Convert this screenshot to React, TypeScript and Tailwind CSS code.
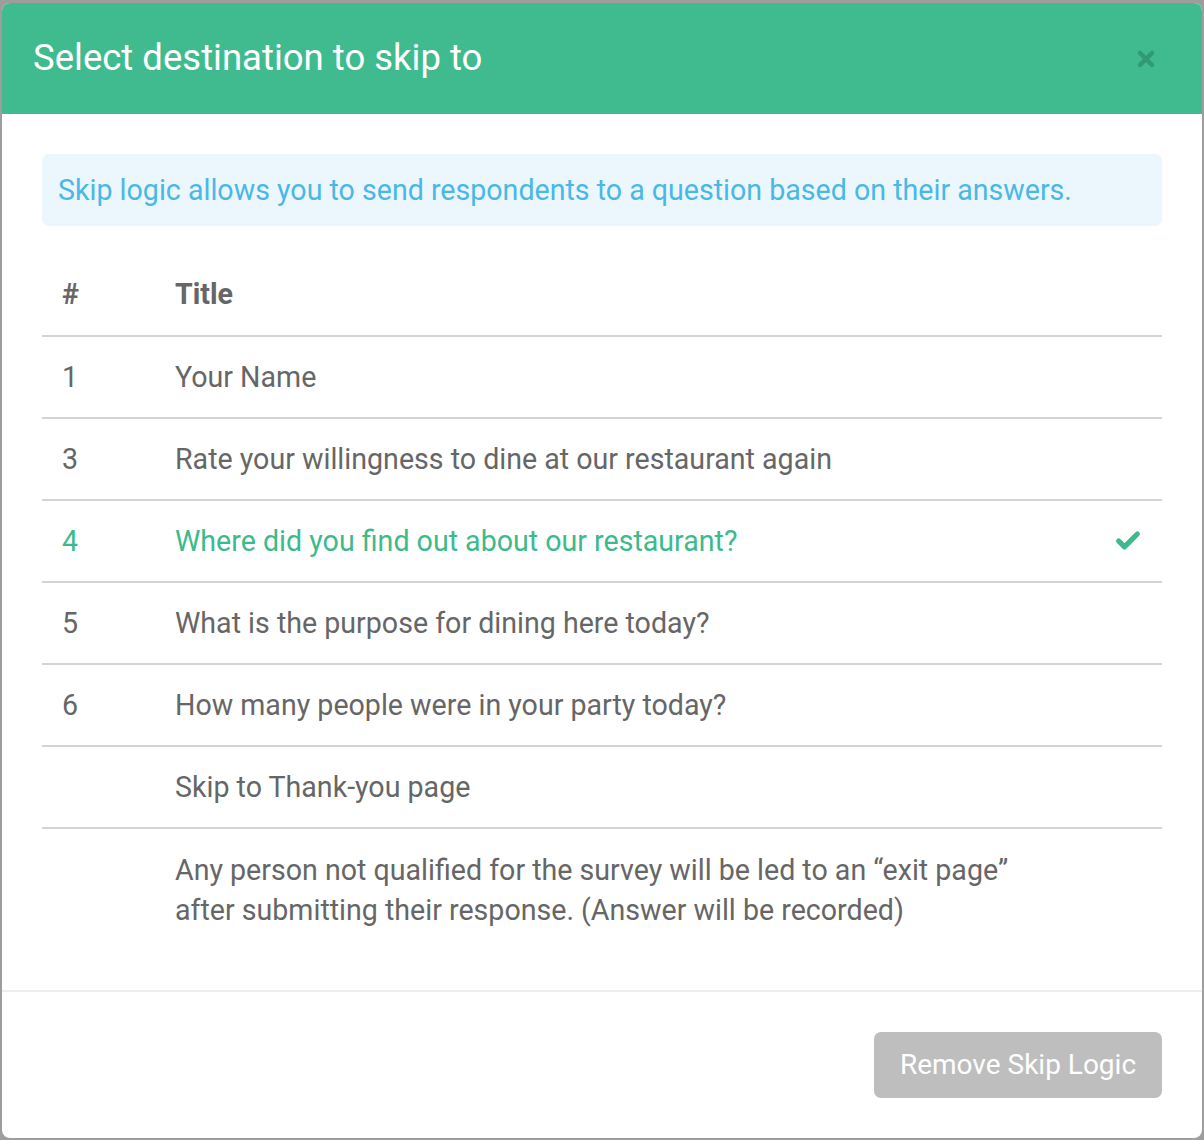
import { Check, X } from 'lucide-react';

const ROWS = [
  { num: '1', title: 'Your Name' },
  { num: '3', title: 'Rate your willingness to dine at our restaurant again' },
  { num: '4', title: 'Where did you find out about our restaurant?', selected: true },
  { num: '5', title: 'What is the purpose for dining here today?' },
  { num: '6', title: 'How many people were in your party today?' },
  { num: '', title: 'Skip to Thank-you page' },
];

const App = () => {
  return (
    <div className="h-[1140px] w-[1204px] bg-[#9d9d9d] pl-[2px] pt-[3px] font-['Roboto',sans-serif]">
      <div className="flex h-[1135px] w-[1200px] flex-col overflow-hidden rounded-[8px] bg-white">
        {/* Header */}
        <div className="flex h-[111px] shrink-0 items-center justify-between bg-[#40bb8f] pl-[31px] pr-[44px]">
          <h2 className="text-[36.5px] font-normal text-white">Select destination to skip to</h2>
          <button className="text-[#2f9a74]">
            <X className="h-[24px] w-[24px]" strokeWidth={4.5} />
          </button>
        </div>

        {/* Body */}
        <div className="flex-1 px-[40px] pt-[40px]">
          <div className="flex h-[72px] items-center rounded-[7px] bg-[#ebf7fc] px-[16px] text-[28.6px] text-[#4ab7e6]">
            Skip logic allows you to send respondents to a question based on their answers.
          </div>

          <table className="mt-[28px] w-full border-collapse text-[28.6px] text-[#666666]">
            <thead>
              <tr className="h-[82px] border-b-2 border-[#d4d4d4]">
                <th className="w-[133px] pl-[20px] text-left font-bold">#</th>
                <th className="text-left font-bold">Title</th>
                <th className="w-[60px]"></th>
              </tr>
            </thead>
            <tbody>
              {ROWS.map((row) => (
                <tr
                  key={row.title}
                  className={`h-[82px] border-b-2 border-[#d4d4d4] ${row.selected ? 'text-[#3dba8c]' : ''}`}
                >
                  <td className="pl-[20px]">{row.num}</td>
                  <td>{row.title}</td>
                  <td className="pr-[20px] text-right">
                    {row.selected && <Check className="ml-auto h-[28px] w-[28px]" strokeWidth={4.5} />}
                  </td>
                </tr>
              ))}
              <tr>
                <td></td>
                <td className="py-[21px] leading-[40px]">
                  Any person not qualified for the survey will be led to an “exit page”
                  <br />
                  after submitting their response. (Answer will be recorded)
                </td>
                <td></td>
              </tr>
            </tbody>
          </table>
        </div>

        {/* Footer */}
        <div className="flex h-[148px] shrink-0 justify-end border-t-2 border-[#eeeeee] px-[40px] pt-[40px]">
          <button className="h-[66px] w-[288px] rounded-[7px] bg-[#bebebe] text-[28px] text-white">
            Remove Skip Logic
          </button>
        </div>
      </div>
    </div>
  );
};

export default App;
